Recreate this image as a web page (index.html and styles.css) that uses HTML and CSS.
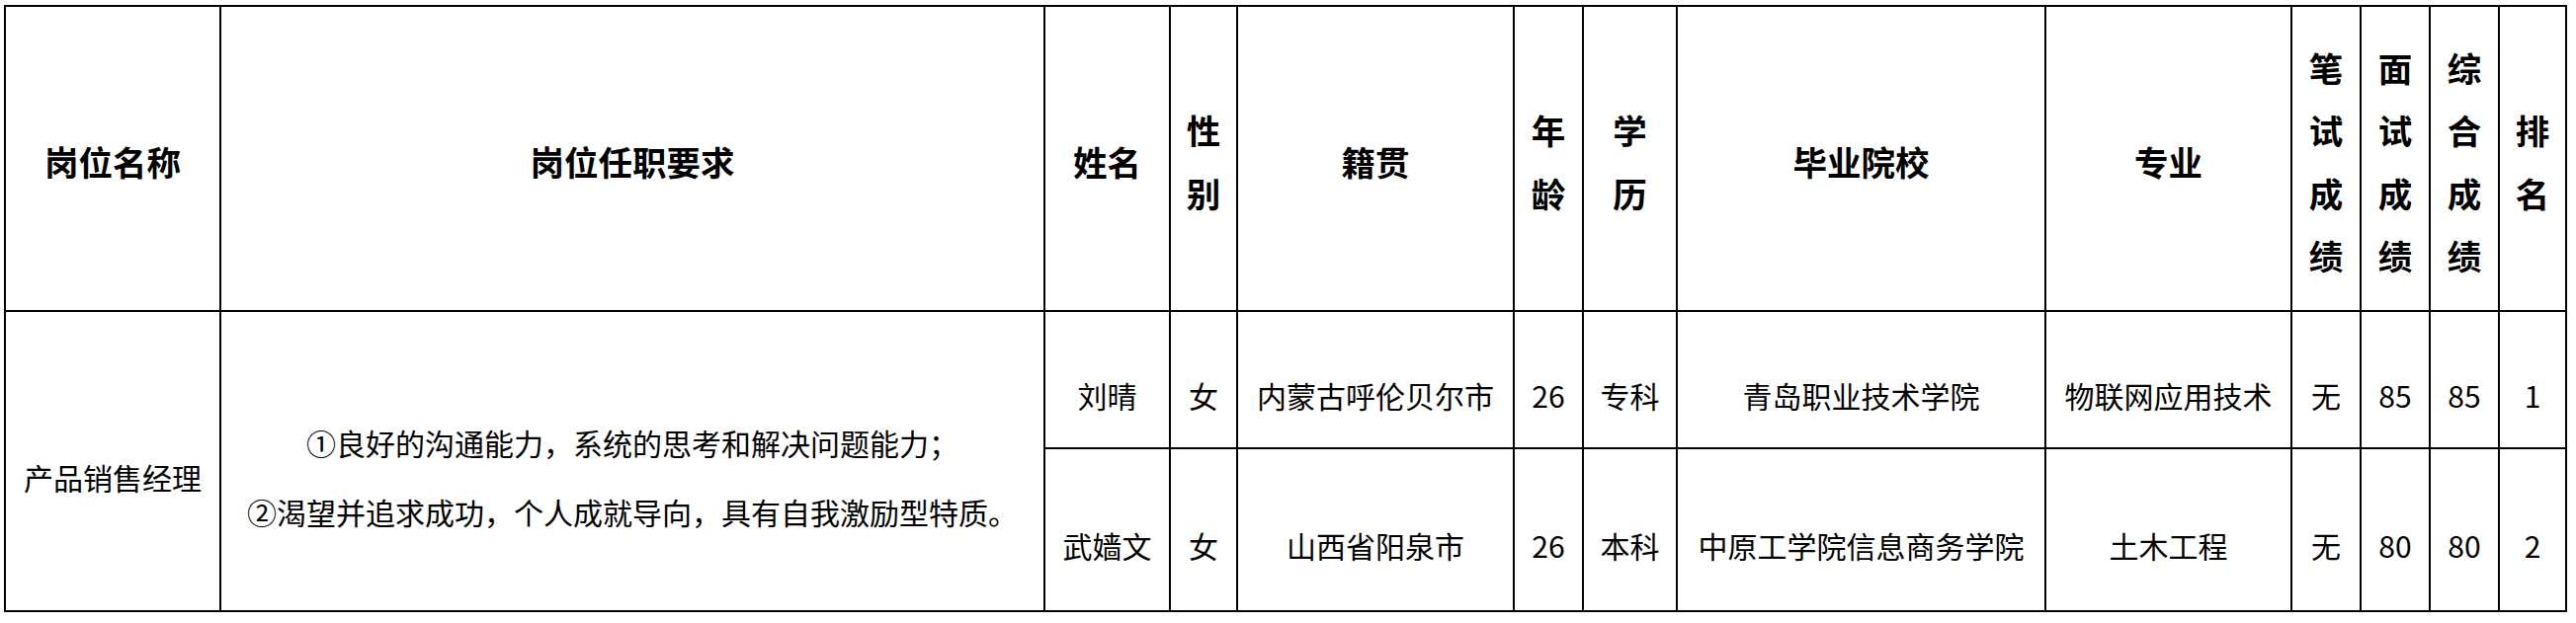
FILE: index.html
```html
<!DOCTYPE html>
<html lang="zh-CN">
<head>
<meta charset="utf-8">
<title>岗位招聘成绩表</title>
<link rel="stylesheet" href="styles.css">
</head>
<body>
<table class="sheet">
  <colgroup>
    <col class="c-post">
    <col class="c-req">
    <col class="c-name">
    <col class="c-sex">
    <col class="c-origin">
    <col class="c-age">
    <col class="c-edu">
    <col class="c-school">
    <col class="c-major">
    <col class="c-score">
    <col class="c-score">
    <col class="c-score">
    <col class="c-rank">
  </colgroup>
  <thead>
    <tr class="head-row">
      <th>岗位名称</th>
      <th>岗位任职要求</th>
      <th>姓名</th>
      <th>性<br>别</th>
      <th>籍贯</th>
      <th>年<br>龄</th>
      <th>学<br>历</th>
      <th>毕业院校</th>
      <th>专业</th>
      <th>笔<br>试<br>成<br>绩</th>
      <th>面<br>试<br>成<br>绩</th>
      <th>综<br>合<br>成<br>绩</th>
      <th>排<br>名</th>
    </tr>
  </thead>
  <tbody>
    <tr class="row-a">
      <td rowspan="2">产品销售经理</td>
      <td rowspan="2">①良好的沟通能力，系统的思考和解决问题能力；<br>②渴望并追求成功，个人成就导向，具有自我激励型特质。</td>
      <td>刘晴</td>
      <td>女</td>
      <td>内蒙古呼伦贝尔市</td>
      <td>26</td>
      <td>专科</td>
      <td>青岛职业技术学院</td>
      <td>物联网应用技术</td>
      <td>无</td>
      <td>85</td>
      <td>85</td>
      <td>1</td>
    </tr>
    <tr class="row-b">
      <td>武嫱文</td>
      <td>女</td>
      <td>山西省阳泉市</td>
      <td>26</td>
      <td>本科</td>
      <td>中原工学院信息商务学院</td>
      <td>土木工程</td>
      <td>无</td>
      <td>80</td>
      <td>80</td>
      <td>2</td>
    </tr>
  </tbody>
</table>
</body>
</html>
```

FILE: styles.css
```css
html, body {
  margin: 0;
  padding: 0;
  background: #ffffff;
}

body {
  padding: 5px 0 0 4px;
  font-family: "Noto Sans CJK SC", "Noto Sans", sans-serif;
  color: #000000;
}

.sheet {
  border-collapse: collapse;
  table-layout: fixed;
  width: 2593px;
}

.sheet th,
.sheet td {
  border: 2px solid #000000;
  padding: 0;
  text-align: center;
  vertical-align: middle;
  white-space: nowrap;
  overflow: hidden;
}

.c-post { width: 218px; }
.c-req { width: 834px; }
.c-name { width: 127px; }
.c-sex { width: 68px; }
.c-origin { width: 280px; }
.c-age { width: 70px; }
.c-edu { width: 95px; }
.c-school { width: 373px; }
.c-major { width: 249px; }
.c-score { width: 70px; }
.c-rank { width: 68px; }

.head-row th {
  height: 309px;
  box-sizing: border-box;
  padding-top: 6px;
  font-size: 34.5px;
  font-weight: 700;
  line-height: 63.5px;
}

.sheet td {
  font-size: 30px;
  font-weight: 400;
  line-height: 70px;
  padding-top: 31px;
  box-sizing: border-box;
}

.row-a td {
  height: 139px;
}

.row-b td {
  height: 165px;
}
```
